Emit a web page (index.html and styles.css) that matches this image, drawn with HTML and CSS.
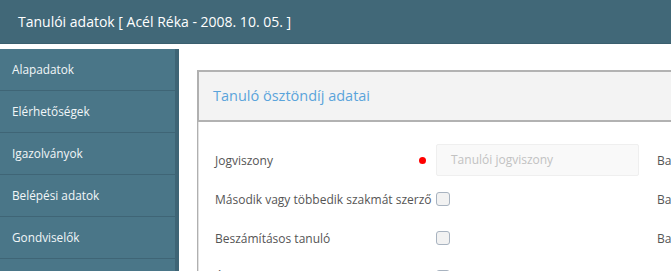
FILE: index.html
```html
<!DOCTYPE html>
<html lang="hu">
<head>
<meta charset="utf-8">
<title>Tanulói adatok</title>
<link rel="stylesheet" href="styles.css">
</head>
<body>
<header class="topbar">Tanulói adatok [ Acél Réka - 2008. 10. 05. ]</header>
<div class="main">
  <nav class="sidebar">
    <a class="nav-item">Alapadatok</a>
    <a class="nav-item">Elérhetőségek</a>
    <a class="nav-item">Igazolványok</a>
    <a class="nav-item">Belépési adatok</a>
    <a class="nav-item">Gondviselők</a>
    <a class="nav-item">Osztályok</a>
  </nav>
  <section class="content">
    <div class="panel">
      <div class="panel-head">Tanuló ösztöndíj adatai</div>
      <div class="panel-body">
        <div class="row">
          <div class="label">Jogviszony</div>
          <div class="mark"><span class="dot"></span></div>
          <div class="field"><div class="input">Tanulói jogviszony</div></div>
          <div class="side">Bank</div>
        </div>
        <div class="row">
          <div class="label">Második vagy többedik szakmát szerző</div>
          <div class="mark"></div>
          <div class="field"><span class="check"></span></div>
          <div class="side">Bank</div>
        </div>
        <div class="row">
          <div class="label">Beszámításos tanuló</div>
          <div class="mark"></div>
          <div class="field"><span class="check"></span></div>
          <div class="side">Bank</div>
        </div>
        <div class="row">
          <div class="label">Árva</div>
          <div class="mark"></div>
          <div class="field"><span class="check"></span></div>
          <div class="side"></div>
        </div>
      </div>
    </div>
  </section>
</div>
</body>
</html>
```
FILE: styles.css
```css
html, body {
  margin: 0;
  padding: 0;
  height: 100%;
  overflow: hidden;
  background: #fff;
  font-family: "Open Sans", "Noto Sans", "Liberation Sans", sans-serif;
}
.topbar {
  height: 44px;
  box-sizing: border-box;
  background: #416878;
  border-bottom: 1px solid #3a5f6e;
  color: #fff;
  font-size: 14px;
  line-height: 43px;
  padding-left: 18px;
  white-space: nowrap;
}
.main {
  display: flex;
  margin-top: 5px;
  height: 300px;
}
.sidebar {
  width: 175px;
  flex: none;
  background: #4a7688;
  border-right: 4px solid #3e6475;
  display: flex;
  flex-direction: column;
}
.nav-item {
  display: block;
  height: 41px;
  border-bottom: 1px solid #3f6576;
  color: #f2f6f8;
  font-size: 11.8px;
  line-height: 41px;
  padding-left: 12px;
  white-space: nowrap;
}
.content {
  flex: 1;
  padding: 21px 0 0 18px;
  min-width: 0;
}
.panel {
  width: 700px;
  border-left: 2px solid #b0b0b0;
}
.panel-head {
  height: 48px;
  background: #f3f3f3;
  border-top: 2px solid #b2b2b2;
  border-bottom: 2px solid #b2b2b2;
  margin-left: -2px;
  border-left: 2px solid #b0b0b0;
  padding-left: 14px;
  color: #5aa4db;
  font-size: 14.5px;
  line-height: 48px;
  white-space: nowrap;
}
.panel-body {
  border-left: 1px solid #e2e2e2;
  margin-left: -1px;
  padding: 22px 0 0 16px;
  display: flex;
  flex-direction: column;
  gap: 7px;
}
.row {
  display: grid;
  grid-template-columns: 200px 21px 203px 1fr;
  align-items: center;
  height: 32px;
}
.label {
  color: #555;
  font-size: 12px;
  white-space: nowrap;
}
.mark {
  display: flex;
  align-items: center;
}
.dot {
  width: 7px;
  height: 7px;
  border-radius: 50%;
  background: #f00;
  margin-left: 4px;
}
.field {
  display: flex;
  align-items: center;
}
.input {
  box-sizing: border-box;
  width: 203px;
  height: 32px;
  background: #f9f9f9;
  border: 1px solid #efefef;
  border-radius: 2px;
  color: #c2c2c2;
  font-size: 12px;
  line-height: 30px;
  padding-left: 14px;
}
.check {
  box-sizing: border-box;
  width: 14px;
  height: 14px;
  border: 1px solid #a8b3c0;
  border-radius: 3px;
  background: #f2f2f2;
}
.side {
  padding-left: 18px;
  color: #555;
  font-size: 12px;
  white-space: nowrap;
}
```
